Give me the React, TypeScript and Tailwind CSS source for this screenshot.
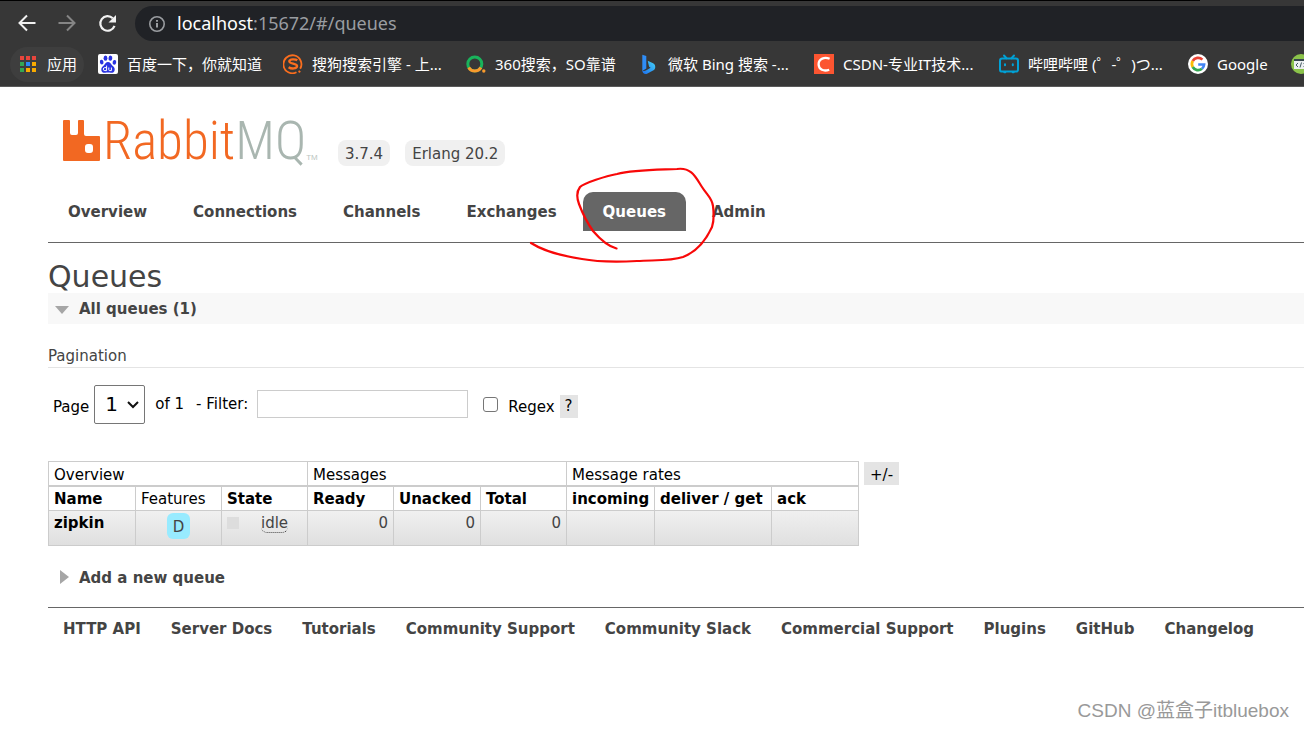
import type { ReactNode } from "react";

const tabs = ["Overview", "Connections", "Channels", "Exchanges", "Queues", "Admin"];

const footerLinks = [
  "HTTP API",
  "Server Docs",
  "Tutorials",
  "Community Support",
  "Community Slack",
  "Commercial Support",
  "Plugins",
  "GitHub",
  "Changelog",
];

function AppsIcon() {
  const colors = ["#e8453c", "#e8453c", "#e8453c", "#34a853", "#2a8af6", "#f9ab00", "#34a853", "#f9ab00", "#f9ab00"];
  return (
    <svg viewBox="0 0 16 16" className="size-4" aria-hidden="true">
      {colors.map((c, i) => (
        <rect key={i} x={(i % 3) * 6} y={Math.floor(i / 3) * 6} width="4" height="4" fill={c} />
      ))}
    </svg>
  );
}

function BaiduIcon() {
  return (
    <svg viewBox="0 0 20 20" className="size-5" aria-hidden="true">
      <rect width="20" height="20" rx="2" fill="#fff" />
      <g fill="#2932e1">
        <ellipse cx="3.7" cy="8.2" rx="1.8" ry="2.4" transform="rotate(-12 3.7 8.2)" />
        <ellipse cx="7.5" cy="4.2" rx="1.9" ry="2.6" />
        <ellipse cx="12.4" cy="4.2" rx="1.9" ry="2.6" transform="rotate(8 12.4 4.2)" />
        <ellipse cx="16.4" cy="8.4" rx="1.8" ry="2.4" transform="rotate(12 16.4 8.4)" />
        <path d="M10 8c2 0 2.7 1.7 4 3.2 1.600 1.500 3 2.500 2.700 4.700-.3 2.200-2 3-4 2.800-1.800-.2-3.600-.2-5.400 0-2 .2-3.700-.6-4-2.800-.3-2.200 1.200-3.200 2.700-4.700C7.300 9.700 8 8 10 8z" />
      </g>
      <path d="M8.600 11.600v5h-1.800a1.500 1.500 0 0 1 0-3h1.800M10.800 13.500v2.200c0 .6.3.9.9.9h1.700v-3.100" fill="none" stroke="#fff" strokeWidth="1" />
    </svg>
  );
}

function SogouIcon() {
  return (
    <svg viewBox="0 0 20 20" className="size-5" aria-hidden="true">
      <path d="M17.200 14.800A9 9 0 1 0 13.500 18.300" fill="none" stroke="#fb6e1e" strokeWidth="1.800" />
      <path d="M14.300 6.300C12.500 5 6.500 4.600 6.300 7.400c-.1 2.800 8 1.800 7.800 4.800-.2 2.900-6 2.800-8.500 1" fill="none" stroke="#fb6e1e" strokeWidth="2.300" />
      <path d="M16.300 16.200l1.600 1.500-1.800 1.300-1-1.700z" fill="#fb6e1e" />
    </svg>
  );
}

function So360Icon() {
  return (
    <svg viewBox="0 0 20 20" className="size-5" aria-hidden="true">
      <circle cx="8.800" cy="10" r="7" fill="none" stroke="#19b35b" strokeWidth="3" />
      <path d="M2.700 13.500a7 7 0 0 0 12.200 0" fill="none" stroke="#f99a2c" strokeWidth="3" />
      <circle cx="17.800" cy="17" r="1.700" fill="#f99a2c" />
    </svg>
  );
}

function BingIcon() {
  return (
    <svg viewBox="0 0 20 20" className="size-5" aria-hidden="true">
      <defs>
        <linearGradient id="bing" x1="0" y1="1" x2="1" y2="0">
          <stop offset="0" stopColor="#1b6ff0" />
          <stop offset="1" stopColor="#46d3f5" />
        </linearGradient>
      </defs>
      <path d="M3.300.7l4 1.400v12.500l-4 2.400z" fill="#2f8df7" />
      <path d="M8.700 6.700l5.400 2.600c3 1.700 2.600 5.500.4 7L8 19.700c-2.600.8-4.700-.9-4.700-3.200 1.400 1 2.600.5 4-.3l4.300-2.500-1.500-.9z" fill="url(#bing)" />
    </svg>
  );
}

function CsdnIcon() {
  return (
    <svg viewBox="0 0 20 20" className="size-5" aria-hidden="true">
      <rect width="20" height="20" fill="#fc5531" />
      <path d="M15.600 4.800c-5-2.200-11-.2-11 5.500 0 5.500 5.400 7.400 10.600 5.400" fill="none" stroke="#fff" strokeWidth="2.300" />
    </svg>
  );
}

function BilibiliIcon() {
  return (
    <svg viewBox="0 0 20 20" className="size-5" fill="none" stroke="#00a1d6" strokeWidth="2" strokeLinecap="round" aria-hidden="true">
      <rect x="1" y="4.600" width="18" height="13" rx="2.200" />
      <path d="M5 1.500l2.500 2.700M15 1.500l-2.500 2.700M5.300 18.300h1M13.700 18.300h1" />
      <path d="M6 10.200v1M13.800 10.200v1" />
    </svg>
  );
}

function GoogleIcon() {
  return (
    <svg viewBox="0 0 20 20" className="size-5" aria-hidden="true">
      <circle cx="10" cy="10" r="10" fill="#fff" />
      <g fill="none" strokeWidth="2.700">
        <path d="M14.400 5.600A6.100 6.100 0 0 0 4.700 7" stroke="#ea4335" />
        <path d="M4.700 7a6.100 6.100 0 0 0 0 6" stroke="#fbbc05" />
        <path d="M4.700 13a6.100 6.100 0 0 0 9.300 1.700" stroke="#34a853" />
        <path d="M14 14.700a6 6 0 0 0 2.100-4.200H10.200" stroke="#4285f4" />
      </g>
    </svg>
  );
}

function CodeIcon() {
  return (
    <svg viewBox="0 0 20 20" className="size-5" aria-hidden="true">
      <circle cx="10" cy="10" r="10" fill="#8bc34a" />
      <rect x="3" y="5" width="14" height="10" fill="#eceff1" />
      <rect x="3" y="5" width="14" height="2" fill="#37474f" />
      <path d="M7 9l-2 2 2 2M10.500 8.500l-1.500 5M12.500 9l2 2-2 2" fill="none" stroke="#455a64" />
    </svg>
  );
}

function Bookmark({ icon, label, width }: { icon: ReactNode; label: string; width: string }) {
  return (
    <a href="#bookmark" className="flex shrink-0 items-center gap-[9px]">
      {icon}
      <span className={`whitespace-nowrap ${width}`}>{label}</span>
    </a>
  );
}

function BrowserChrome() {
  return (
    <div className="border-b border-[#5a5a5a] bg-[#373737] font-['Noto_Sans','Noto_Sans_CJK_SC',sans-serif] text-white">
      <div className="h-px w-[92%] bg-black" />
      <div className="flex pt-[5px]">
        <div className="flex w-[135px] shrink-0 items-center gap-5 pl-[17px]">
          <button aria-label="Back" className="size-5">
            <svg viewBox="0 0 20 20" fill="none" stroke="#f1f1f1" strokeWidth="2">
              <path d="M18.500 9H3M10 1.500L2.500 9l7.500 7.500" />
            </svg>
          </button>
          <button aria-label="Forward" className="size-5">
            <svg viewBox="0 0 20 20" fill="none" stroke="#858585" strokeWidth="2">
              <path d="M1.500 9H17M10 1.500l7.500 7.500-7.500 7.500" />
            </svg>
          </button>
          <button aria-label="Reload" className="size-5">
            <svg viewBox="0 0 20 20" fill="none" stroke="#f1f1f1" strokeWidth="2.200">
              <path d="M17.500 11.800A7.300 7.300 0 1 1 15.800 4.300" />
              <path d="M19 1v7.500h-7.500z" fill="#f1f1f1" stroke="none" />
            </svg>
          </button>
        </div>
        <div className="flex h-[35px] grow items-center gap-3 rounded-l-full bg-[#202226] pl-3.5">
          <svg viewBox="0 0 16 16" className="size-4" fill="none" stroke="#9a9da1" strokeWidth="1.600" aria-hidden="true">
            <circle cx="8" cy="8" r="7.200" />
            <path d="M8 7v4.500M8 4v1.800" strokeWidth="2" />
          </svg>
          <span className="pb-0.5 text-[18px] leading-6 text-[#9a9da1]">
            <span className="text-white">localhost</span>:15672/#/queues
          </span>
        </div>
      </div>
      <nav aria-label="Bookmarks" className="flex h-[45px] items-center gap-5 overflow-hidden pt-px pl-2.5 text-[15px]">
        <a href="#apps" className="-mr-1.5 flex h-[35px] shrink-0 items-center gap-[11px] rounded-full bg-[#3e3e3e] pr-[7px] pl-2.5">
          <AppsIcon />
          <span>应用</span>
        </a>
        <Bookmark icon={<BaiduIcon />} label="百度一下，你就知道" width="w-[136px]" />
        <Bookmark icon={<SogouIcon />} label="搜狗搜索引擎 - 上..." width="w-[134px]" />
        <Bookmark icon={<So360Icon />} label="360搜索，SO靠谱" width="w-[124px]" />
        <Bookmark icon={<BingIcon />} label="微软 Bing 搜索 -..." width="w-[126px]" />
        <Bookmark icon={<CsdnIcon />} label="CSDN-专业IT技术..." width="w-[136px]" />
        <Bookmark icon={<BilibiliIcon />} label="哔哩哔哩 (゜-゜)つ..." width="w-[140px]" />
        <Bookmark icon={<GoogleIcon />} label="Google" width="w-[54px]" />
        <Bookmark icon={<CodeIcon />} label="" width="w-5" />
      </nav>
    </div>
  );
}

function Logo() {
  return (
    <div className="flex h-[50px] w-[260px] items-end">
      <svg viewBox="0 0 40 50" className="h-[50px] w-10 shrink-0" aria-hidden="true">
        <path
          d="M1 4h5q1 0 1 1v12q0 2 2 2h4q2 0 2-2V5q0-1 1-1h4q1 0 1 1v13q0 2 2 2h13q1 0 1 1v23q0 1-1 1H1q-1 0-1-1V5q0-1 1-1zM25 28q-3 0-3 3v3q0 3 3 3h2q3 0 3-3v-3q0-3-3-3z"
          fill="#f26822"
          fillRule="evenodd"
        />
      </svg>
      <span className="font-['Roboto_Condensed','Lato',sans-serif] text-[53px] leading-[50px] font-light text-[#f26822]">
        Rabbit<span className="text-[#a9b6b0]">MQ</span>
      </span>
      <span className="pb-0.5 font-['Liberation_Sans',sans-serif] text-[8px] leading-3 text-[#bcc6c2]">TM</span>
    </div>
  );
}

function Scribble() {
  return (
    <svg viewBox="0 0 190 100" className="pointer-events-none absolute -top-[26px] left-[480px] h-[100px] w-[190px]" fill="none" stroke="#f80808" strokeWidth="2.200" strokeLinecap="round" aria-hidden="true">
      <path d="M88.500 82.500C79 80 71 72 65 65C58 55 54 46 51 38C48 30 49 25 52 21C56 17 78 10 89 8C105 4 124 4 149 3C164 1 168 12 174 21C179 29 184 32 185 40C186 48 186 55 184 61C178 74 168 86 155 91C143 95 129 94 109 95C88 96 70 96 54 93C34 90 14 84 3 77" />
    </svg>
  );
}

const groupHead = "h-6 border border-[#ccc] px-[5px] pt-[3px] text-left leading-5 font-normal text-black";
const head = "h-6 border border-[#ccc] px-[5px] pt-0.5 text-left leading-[21px] whitespace-nowrap text-black";
const cell = "h-[35px] border border-[#ccc] px-[5px] pt-px align-top";

function QueueTable() {
  return (
    <div className="flex items-start gap-[5px]">
      <table className="w-[810px] table-fixed border-collapse leading-[22px]">
        <colgroup>
          <col className="w-[87px]" />
          <col className="w-[86px]" />
          <col className="w-[86px]" />
          <col className="w-[86px]" />
          <col className="w-[87px]" />
          <col className="w-[86px]" />
          <col className="w-[88px]" />
          <col className="w-[117px]" />
          <col className="w-[87px]" />
        </colgroup>
        <thead>
          <tr className="border-b-2 border-[#ccc]">
            <th colSpan={3} className={groupHead}>Overview</th>
            <th colSpan={3} className={groupHead}>Messages</th>
            <th colSpan={3} className={groupHead}>Message rates</th>
          </tr>
          <tr>
            <th className={`${head} font-bold`}>Name</th>
            <th className={`${head} font-normal`}>Features</th>
            <th className={`${head} font-bold`}>State</th>
            <th className={`${head} font-bold`}>Ready</th>
            <th className={`${head} font-bold`}>Unacked</th>
            <th className={`${head} font-bold`}>Total</th>
            <th className={`${head} font-bold`}>incoming</th>
            <th className={`${head} font-bold`}>deliver / get</th>
            <th className={`${head} font-bold`}>ack</th>
          </tr>
        </thead>
        <tbody>
          <tr className="bg-linear-to-b from-[#f0f0f0] to-[#dfdfdf]">
            <td className={cell}>
              <a href="#zipkin" className="font-bold text-black">zipkin</a>
            </td>
            <td className={`${cell} text-center`}>
              <span className="mt-px inline-block rounded-md bg-[#98ebff] px-1.5 pt-[3px] pb-px">D</span>
            </td>
            <td className={cell}>
              <div className="flex items-start">
                <span className="mt-[5px] size-3 bg-[#ddd]" />
                <span className="mt-0.5 ml-[22px] rounded-md border-b border-dotted border-[#444] leading-[18px]">idle</span>
              </div>
            </td>
            <td className={`${cell} text-right`}>0</td>
            <td className={`${cell} text-right`}>0</td>
            <td className={`${cell} text-right`}>0</td>
            <td className={cell} />
            <td className={cell} />
            <td className={cell} />
          </tr>
        </tbody>
      </table>
      <button className="mt-px h-[23px] bg-[#e4e4e4] px-1.5 pt-0.5 text-black">+/-</button>
    </div>
  );
}

export default function App() {
  return (
    <div className="relative min-h-screen overflow-x-hidden bg-white font-['DejaVu_Sans',Verdana,sans-serif] text-[15px] leading-5 text-[#444]">
      <BrowserChrome />
      <div className="pl-12">
        <header className="relative border-b border-[#666] pt-[29px] pb-[11px]">
          <div className="flex items-end pl-[15px]">
            <Logo />
            <span className="ml-[15px] rounded-lg bg-[#f0f0f0] px-[7px] pt-1 pb-0.5">3.7.4</span>
            <span className="ml-[15px] rounded-lg bg-[#f0f0f0] px-[7px] pt-1 pb-0.5">Erlang 20.2</span>
          </div>
          <div className="relative mt-[26px]">
            <nav aria-label="Sections" className="flex gap-1.5 font-bold">
              {tabs.map((tab) => (
                <a
                  key={tab}
                  href={`#${tab.toLowerCase()}`}
                  className={
                    tab === "Queues"
                      ? "rounded-t-[10px] bg-[#666] px-5 pt-2.5 pb-[9px] text-white"
                      : "px-5 pt-2.5 pb-[9px]"
                  }
                >
                  {tab}
                </a>
              ))}
            </nav>
            <Scribble />
          </div>
        </header>

        <main>
          <h1 className="pt-[17px] text-[30px] leading-[33px]">Queues</h1>
          <h2 className="font-bold">
            <button className="flex w-full items-center gap-2.5 bg-[#f8f8f8] pt-1.5 pb-1 pl-[7px] text-left leading-[21px]">
              <svg viewBox="0 0 14 8" className="h-2 w-3.5" fill="#a6a6a6" aria-hidden="true">
                <path d="M0 0h14L7 8z" />
              </svg>
              All queues (1)
            </button>
          </h2>
          <h3 className="mt-[22px] border-b border-[#e4e4e4] pb-px">Pagination</h3>

          <form className="mt-4 flex h-10 items-center pl-[5px] text-black">
            <label htmlFor="page" className="pt-1.5">Page</label>
            <div className="relative ml-[5px]">
              <select id="page" className="h-[39px] w-[51px] appearance-none rounded-xs border border-[#767676] bg-white pl-2.5 text-[20px]">
                <option>1</option>
              </select>
              <svg viewBox="0 0 12 8" className="pointer-events-none absolute top-4 right-1.5 h-2 w-3" fill="none" stroke="#111" strokeWidth="2" aria-hidden="true">
                <path d="M1 1l5 5 5-5" />
              </svg>
            </div>
            <span className="ml-2.5">of 1</span>
            <label htmlFor="filter" className="ml-3">- Filter:</label>
            <input id="filter" type="text" className="ml-[9px] h-7 w-[211px] border border-[#ccc] px-1" />
            <input id="regex" type="checkbox" className="ml-[15px] size-[15px] appearance-none rounded-[3px] border border-[#767676] bg-white" />
            <label htmlFor="regex" className="ml-2.5 pt-1.5">Regex</label>
            <button type="button" className="mt-1 ml-[5px] h-[23px] bg-[#e4e4e4] px-[5px]">?</button>
          </form>

          <div className="mt-[37px]">
            <QueueTable />
          </div>

          <h2 className="mt-[22px] font-bold">
            <button className="flex items-center gap-2.5 pl-3">
              <svg viewBox="0 0 9 14" className="mb-0.5 h-3.5 w-[9px]" fill="#a6a6a6" aria-hidden="true">
                <path d="M0 0l9 7-9 7z" />
              </svg>
              Add a new queue
            </button>
          </h2>
        </main>

        <footer className="mt-[19px] border-t border-[#666] pt-[11px] pl-[15px]">
          <nav aria-label="Footer" className="flex gap-[30px] font-bold whitespace-nowrap">
            {footerLinks.map((link) => (
              <a key={link} href="#footer">{link}</a>
            ))}
          </nav>
        </footer>
      </div>
      <span className="absolute right-[15px] bottom-1.5 font-['Liberation_Sans','Noto_Sans_CJK_SC',sans-serif] text-[19px] leading-6 text-[#999]">
        CSDN @蓝盒子itbluebox
      </span>
    </div>
  );
}
